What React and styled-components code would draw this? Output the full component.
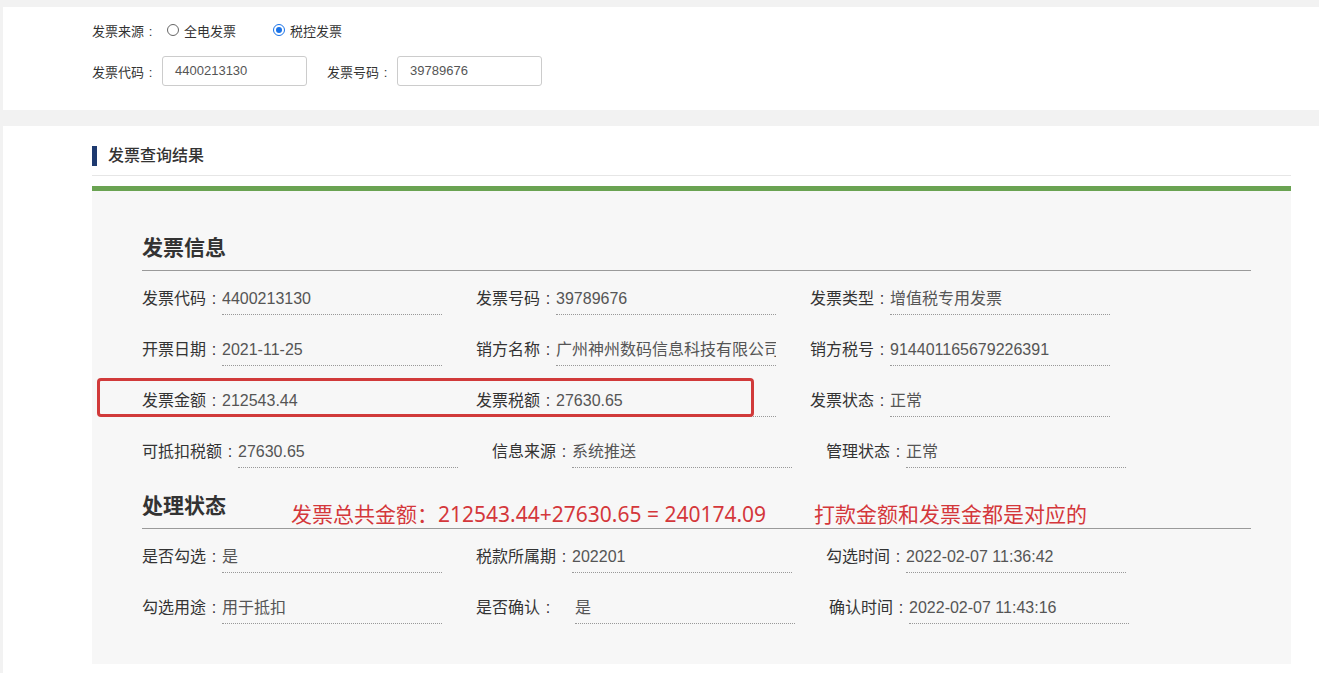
import styled, { createGlobalStyle } from "styled-components";

const GlobalStyle = createGlobalStyle`
  body {
    margin: 0;
    background: #f2f2f2;
    font-family: "Liberation Sans", "Noto Sans CJK SC", sans-serif;
    color: #333;
  }
`;

const Page = styled.div`
  padding: 7px 0 0 3px;
`;

const FilterPanel = styled.div`
  background: #fff;
  height: 103px;
  box-sizing: border-box;
  padding: 12px 89px 0;
  font-size: 13px;
  color: #333;
`;

const FilterRow = styled.div`
  display: flex;
  align-items: center;
  height: ${p => p.$h || 22}px;
  margin-top: ${p => p.$mt || 0}px;
`;

const Colon = styled.span`
  display: inline-block;
  width: 1em;
  text-align: center;
`;

const RadioOption = styled.label`
  display: flex;
  align-items: center;
  margin-left: ${p => p.$ml}px;
  & span.dot {
    width: 10px;
    height: 10px;
    border-radius: 50%;
    border: 1px solid ${p => (p.$on ? "#1a73e8" : "#666")};
    margin-right: 5px;
    position: relative;
    background: #fff;
  }
  & span.dot::after {
    content: "";
    display: ${p => (p.$on ? "block" : "none")};
    position: absolute;
    inset: 2px;
    border-radius: 50%;
    background: #1a73e8;
  }
`;

const TextBox = styled.div`
  width: 145px;
  height: 30px;
  box-sizing: border-box;
  border: 1px solid #ccc;
  border-radius: 3px;
  margin: 0 20px 0 5px;
  padding-left: 12px;
  line-height: 28px;
  color: #555;
`;

const ResultPanel = styled.div`
  margin-top: 16px;
  background: #fff;
  padding: 20px 28px 10px 89px;
`;

const TitleWrap = styled.div`
  border-bottom: 1px solid #e6e6e6;
  padding-bottom: 9px;
`;

const Title = styled.h2`
  margin: 0;
  height: 20px;
  line-height: 20px;
  border-left: 5px solid #1e3a70;
  padding-left: 11px;
  font-size: 16px;
  font-weight: 500;
  color: #333;
`;

const GreenBar = styled.div`
  margin-top: 10px;
  height: 5px;
  background: #6aa352;
`;

const InfoArea = styled.div`
  position: relative;
  background: #f7f7f7;
  padding: 35px 40px 40px 50px;
`;

const Heading = styled.h3`
  margin: ${p => p.$mt || 0}px 0 0;
  line-height: 40px;
  padding-bottom: 4px;
  border-bottom: 1px solid #9a9a9a;
  font-size: 21px;
  font-weight: 700;
  color: #333;
  font-family: "Noto Sans CJK SC", sans-serif;
`;

const FieldList = styled.div`
  display: grid;
  gap: 20px;
  margin-top: 13px;
`;

const FieldRow = styled.div`
  display: flex;
`;

const Field = styled.div`
  display: flex;
  margin-right: 34px;
  font-size: 16px;
  line-height: 30px;
`;

const Label = styled.span`
  color: #333;
  margin-right: ${p => p.$extra || 0}px;
`;

const Value = styled.span`
  width: 220px;
  border-bottom: 1px dotted #999;
  color: #555;
  white-space: nowrap;
  overflow: hidden;
`;

const MarkBox = styled.div`
  position: absolute;
  left: 5px;
  top: 187px;
  width: 657px;
  height: 39px;
  box-sizing: border-box;
  border: 3px solid #d13a3a;
  border-radius: 4px;
`;

const Note = styled.div`
  position: absolute;
  left: ${p => p.$left}px;
  top: 309px;
  font-family: "Noto Sans", "Noto Sans CJK SC", sans-serif;
  font-size: 21px;
  line-height: 28px;
  color: #d4373b;
  white-space: nowrap;
`;

const invoiceRows = [
  [
    ["发票代码", "4400213130"],
    ["发票号码", "39789676"],
    ["发票类型", "增值税专用发票"],
  ],
  [
    ["开票日期", "2021-11-25"],
    ["销方名称", "广州神州数码信息科技有限公司"],
    ["销方税号", "914401165679226391"],
  ],
  [
    ["发票金额", "212543.44"],
    ["发票税额", "27630.65"],
    ["发票状态", "正常"],
  ],
  [
    ["可抵扣税额", "27630.65"],
    ["信息来源", "系统推送"],
    ["管理状态", "正常"],
  ],
];

const stateRows = [
  [
    ["是否勾选", "是"],
    ["税款所属期", "202201"],
    ["勾选时间", "2022-02-07 11:36:42"],
  ],
  [
    ["勾选用途", "用于抵扣"],
    ["是否确认", "是", 19],
    ["确认时间", "2022-02-07 11:43:16"],
  ],
];

const Fields = ({ rows }) => (
  <FieldList>
    {rows.map((row, i) => (
      <FieldRow key={i}>
        {row.map(([label, value, extra]) => (
          <Field key={label}>
            <Label $extra={extra}>
              {label}
              <Colon>:</Colon>
            </Label>
            <Value>{value}</Value>
          </Field>
        ))}
      </FieldRow>
    ))}
  </FieldList>
);

const App = () => (
  <Page>
    <GlobalStyle />
    <FilterPanel>
      <FilterRow>
        <span>
          发票来源<Colon>:</Colon>
        </span>
        <RadioOption $ml={10}>
          <span className="dot" />
          全电发票
        </RadioOption>
        <RadioOption $ml={37} $on>
          <span className="dot" />
          税控发票
        </RadioOption>
      </FilterRow>
      <FilterRow $h={30} $mt={15}>
        <span>
          发票代码<Colon>:</Colon>
        </span>
        <TextBox>4400213130</TextBox>
        <span>
          发票号码<Colon>:</Colon>
        </span>
        <TextBox>39789676</TextBox>
      </FilterRow>
    </FilterPanel>

    <ResultPanel>
      <TitleWrap>
        <Title>发票查询结果</Title>
      </TitleWrap>
      <GreenBar />
      <InfoArea>
        <Heading>发票信息</Heading>
        <Fields rows={invoiceRows} />
        <Heading $mt={16}>处理状态</Heading>
        <Fields rows={stateRows} />

        <MarkBox />
        <Note $left={199}>发票总共金额：212543.44+27630.65 = 240174.09</Note>
        <Note $left={722}>打款金额和发票金都是对应的</Note>
      </InfoArea>
    </ResultPanel>
  </Page>
);

export default App;
